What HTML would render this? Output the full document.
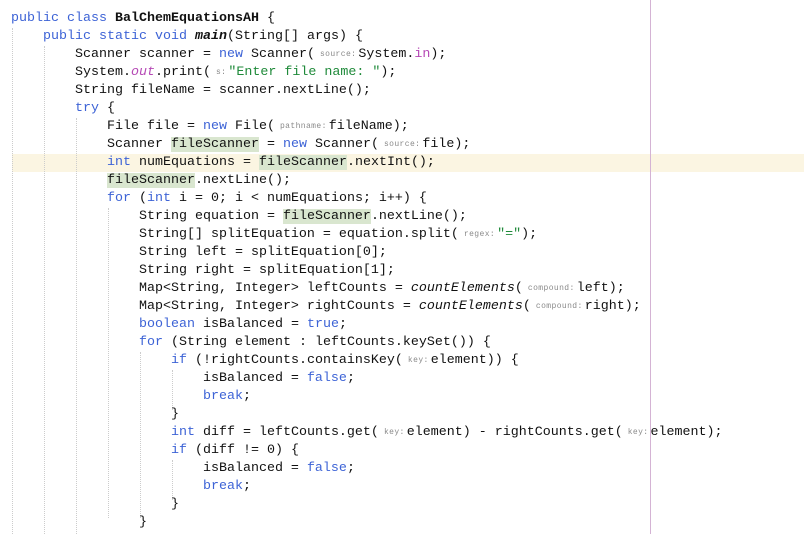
<!DOCTYPE html>
<html><head><style>
html,body{margin:0;padding:0;background:#fff;width:804px;height:534px;overflow:hidden;position:relative}
.l{position:absolute;left:11px;height:18px;line-height:18px;white-space:pre;font-family:"Liberation Mono",monospace;font-size:13.33px;color:#111}
.k{color:#3d63d6}.s{color:#1f8a3a}.p{color:#b548b5}.i{font-style:italic}.b{font-weight:bold}
.h{font-size:8px;color:#8a8a8a;letter-spacing:0.4px;vertical-align:1px;margin:0 2px 0 5px}
.g{background:#d9e6cf}
.cur{position:absolute;left:12px;width:792px;top:154px;height:18px;background:#fbf5e2}
.gd{position:absolute;width:0;border-left:1px dotted #ccc}
.rm{position:absolute;left:650px;top:0;width:1px;height:534px;background:#d4b3d4}
</style></head><body>
<div class="cur"></div>
<div class="rm"></div>
<div class="gd" style="left:12px;top:28px;height:506px"></div>
<div class="gd" style="left:44px;top:46px;height:488px"></div>
<div class="gd" style="left:76px;top:118px;height:416px"></div>
<div class="gd" style="left:108px;top:208px;height:310px"></div>
<div class="gd" style="left:140px;top:352px;height:166px"></div>
<div class="gd" style="left:172px;top:370px;height:40px"></div>
<div class="gd" style="left:172px;top:460px;height:40px"></div>
<div class="l" style="top:10px"><span class="k">public class </span><span class="b">BalChemEquationsAH</span> {</div>
<div class="l" style="top:28px">    <span class="k">public static void </span><span class="b i">main</span>(String[] args) {</div>
<div class="l" style="top:46px">        Scanner scanner = <span class="k">new</span> Scanner(<span class="h">source:</span>System.<span class="p">in</span>);</div>
<div class="l" style="top:64px">        System.<span class="p i">out</span>.print(<span class="h">s:</span><span class="s">"Enter file name: "</span>);</div>
<div class="l" style="top:82px">        String fileName = scanner.nextLine();</div>
<div class="l" style="top:100px">        <span class="k">try</span> {</div>
<div class="l" style="top:118px">            File file = <span class="k">new</span> File(<span class="h">pathname:</span>fileName);</div>
<div class="l" style="top:136px">            Scanner <span class="g">fileScanner</span> = <span class="k">new</span> Scanner(<span class="h">source:</span>file);</div>
<div class="l" style="top:154px">            <span class="k">int</span> numEquations = <span class="g">fileScanner</span>.nextInt();</div>
<div class="l" style="top:172px">            <span class="g">fileScanner</span>.nextLine();</div>
<div class="l" style="top:190px">            <span class="k">for</span> (<span class="k">int</span> i = 0; i &lt; numEquations; i++) {</div>
<div class="l" style="top:208px">                String equation = <span class="g">fileScanner</span>.nextLine();</div>
<div class="l" style="top:226px">                String[] splitEquation = equation.split(<span class="h">regex:</span><span class="s">"="</span>);</div>
<div class="l" style="top:244px">                String left = splitEquation[0];</div>
<div class="l" style="top:262px">                String right = splitEquation[1];</div>
<div class="l" style="top:280px">                Map&lt;String, Integer&gt; leftCounts = <span class="i">countElements</span>(<span class="h">compound:</span>left);</div>
<div class="l" style="top:298px">                Map&lt;String, Integer&gt; rightCounts = <span class="i">countElements</span>(<span class="h">compound:</span>right);</div>
<div class="l" style="top:316px">                <span class="k">boolean</span> isBalanced = <span class="k">true</span>;</div>
<div class="l" style="top:334px">                <span class="k">for</span> (String element : leftCounts.keySet()) {</div>
<div class="l" style="top:352px">                    <span class="k">if</span> (!rightCounts.containsKey(<span class="h">key:</span>element)) {</div>
<div class="l" style="top:370px">                        isBalanced = <span class="k">false</span>;</div>
<div class="l" style="top:388px">                        <span class="k">break</span>;</div>
<div class="l" style="top:406px">                    }</div>
<div class="l" style="top:424px">                    <span class="k">int</span> diff = leftCounts.get(<span class="h">key:</span>element) - rightCounts.get(<span class="h">key:</span>element);</div>
<div class="l" style="top:442px">                    <span class="k">if</span> (diff != 0) {</div>
<div class="l" style="top:460px">                        isBalanced = <span class="k">false</span>;</div>
<div class="l" style="top:478px">                        <span class="k">break</span>;</div>
<div class="l" style="top:496px">                    }</div>
<div class="l" style="top:514px">                }</div>
</body></html>
